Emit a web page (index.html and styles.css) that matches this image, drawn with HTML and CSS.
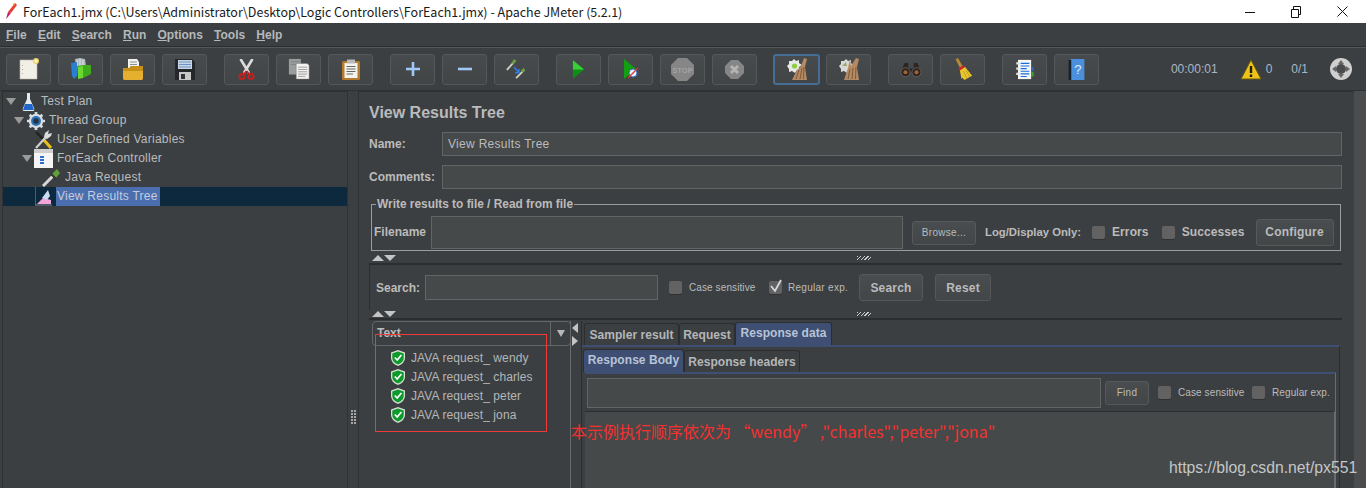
FILE: index.html
```html
<!DOCTYPE html>
<html lang="en">
<head>
<meta charset="utf-8">
<title>ForEach1.jmx - Apache JMeter (5.2.1)</title>
<link rel="stylesheet" href="styles.css">
</head>
<body>
<div class="app">
  <header class="titlebar">
    <svg class="title-icon" width="12" height="17" viewBox="0 0 12 17"><path d="M10 0 L12 2 L6 10 L3 9Z" fill="#e8402f"/><path d="M3 9 L6 10 L2 15 L1 16Z" fill="#c2205c"/><path d="M8 1 L10 0 L9 3Z" fill="#f39a2d"/></svg>
    <span class="title-text">ForEach1.jmx (C:\Users\Administrator\Desktop\Logic Controllers\ForEach1.jmx) - Apache JMeter (5.2.1)</span>
    <div class="win-controls">
      <span class="win-btn"><svg width="10" height="10" viewBox="0 0 10 10"><path d="M0 5.5H10" stroke="#111" fill="none"/></svg></span>
      <span class="win-btn"><svg width="10" height="12" viewBox="0 0 10 12"><path d="M0.5 3.5H7.5V11.5H0.5ZM2.5 3.5V0.5H9.5V8.5H7.5" stroke="#111" fill="none"/></svg></span>
      <span class="win-btn"><svg width="11" height="11" viewBox="0 0 11 11"><path d="M0.5 0.5L10.5 10.5M10.5 0.5L0.5 10.5" stroke="#111" fill="none"/></svg></span>
    </div>
  </header>
  <nav class="menubar">
    <span><u>F</u>ile</span><span><u>E</u>dit</span><span><u>S</u>earch</span><span><u>R</u>un</span><span><u>O</u>ptions</span><span><u>T</u>ools</span><span><u>H</u>elp</span>
  </nav>
  <div class="toolbar">
    <div class="tool-group">
      <button class="tool"><svg width="20" height="22" viewBox="0 0 20 22"><path d="M1 2H18V21H1Z" fill="#f1efe6" stroke="#bdbbb0" stroke-width=".6"/><circle cx="17" cy="3" r="3" fill="#e9d568"/><circle cx="17" cy="3" r="1.500" fill="#fff9c9"/><path d="M3.500 7v.8M3.500 11v.8M3.500 15v.8" stroke="#999" fill="none"/></svg></button>
      <button class="tool"><svg width="20" height="22" viewBox="0 0 20 22"><path d="M4 1L9 0L14 1L15 8H5Z" fill="#aeb8bc"/><path d="M6 2V8M9 1V8M12 2V8" stroke="#e1e6e8" fill="none"/><path d="M0 5L6 4V18L3 21L1 18Z" fill="#2b7fd0"/><path d="M6 8L13 7H20V16L12 20H7Z" fill="#3faa1d"/><path d="M12 8V20L7 21V9Z" fill="#6ad92f"/></svg></button>
      <button class="tool"><svg width="20" height="21" viewBox="0 0 20 21"><path d="M5 0H14L16 3V12H5Z" fill="#f2f2ee"/><path d="M7 3H14M7 5.500H14M7 8H14" stroke="#8a8f96" fill="none"/><path d="M0 9H6L8 7H20V19Q20 21 18 21H2Q0 21 0 19Z" fill="#c88f18"/><path d="M0 12H20V19Q20 21 18 21H2Q0 21 0 19Z" fill="#e5b030"/></svg></button>
      <button class="tool"><svg width="20" height="21" viewBox="0 0 20 21"><path d="M0 0H17L20 3V21H0Z" fill="#25272a"/><path d="M3 1H17V10H3Z" fill="#c9d6e6"/><path d="M4 3H16M4 5.500H16M4 8H16" stroke="#6f94c4" fill="none"/><path d="M4 13H16V21H4Z" fill="#c8c8c8"/><path d="M6 15H10V20H6Z" fill="#333"/></svg></button>
    </div>
    <div class="tool-group">
      <button class="tool"><svg width="17" height="21" viewBox="0 0 17 21"><path d="M2.500 0L11 14M14.500 0L6 14" stroke="#dcdcdc" stroke-width="2.600" fill="none"/><circle cx="4" cy="17.500" r="2.500" fill="none" stroke="#c51f1f" stroke-width="2"/><circle cx="13" cy="17.500" r="2.500" fill="none" stroke="#c51f1f" stroke-width="2"/><path d="M8.500 12L5.500 15.500M8.500 12L11.500 15.500" stroke="#c51f1f" stroke-width="1.800"/></svg></button>
      <button class="tool"><svg width="22" height="22" viewBox="0 0 24 24"><path d="M1 1H14V18H1Z" fill="#9b9d9d"/><path d="M3 4H13M3 7H13" stroke="#7f8182" fill="none"/><path d="M9 6H21L23 8V23H9Z" fill="#f2f2f0" stroke="#777" stroke-width=".5"/><path d="M11 10H21M11 12.500H21M11 15H21M11 17.500H21M11 20H19" stroke="#999" fill="none"/></svg></button>
      <button class="tool"><svg width="18" height="21" viewBox="0 0 18 21"><rect x="0" y="2" width="18" height="19" rx="1.500" fill="#b57a2d"/><path d="M2.500 4H15.500V19H2.500Z" fill="#f4f4ef"/><path d="M5 0.500H13V4.500H5Z" fill="#b9b9b9"/><path d="M4.500 7.500H13.500M4.500 10H13.500M4.500 12.500H13.500M4.500 15H11" stroke="#666" fill="none"/></svg></button>
    </div>
    <div class="tool-group">
      <button class="tool"><svg width="14" height="14" viewBox="0 0 14 14"><path d="M7 0V14M0 7H14" stroke="#9fc8f6" stroke-width="2.600" fill="none"/></svg></button>
      <button class="tool"><svg width="14" height="14" viewBox="0 0 14 14"><path d="M0 7H14" stroke="#9fc8f6" stroke-width="2.600" fill="none"/></svg></button>
      <button class="tool"><svg width="22" height="22" viewBox="0 0 24 24"><path d="M1 13L10 3" stroke="#cfd3c8" stroke-width="2" fill="none"/><path d="M7 6L10 2" stroke="#6b9b3c" stroke-width="3" fill="none"/><path d="M11 22L20 13" stroke="#cfd3c8" stroke-width="2" fill="none"/><path d="M17 15L20 12" stroke="#6b9b3c" stroke-width="3" fill="none"/><path d="M9 10L14 16M14 12V16H10" stroke="#2f7fe8" stroke-width="1.600" fill="none"/></svg></button>
    </div>
    <div class="tool-group">
      <button class="tool"><svg width="13" height="19" viewBox="0 0 14 20"><path d="M1 0L13 10L1 20Z" fill="#0f8f14"/><path d="M1 0L13 10L1 10Z" fill="#39cf39"/></svg></button>
      <button class="tool"><svg width="16" height="20" viewBox="0 0 16 20"><path d="M1 0L13 10L1 20Z" fill="#12a012"/><circle cx="10" cy="14" r="4" fill="#e8eefb" stroke="#3b6fc4"/><path d="M5 19L15 9" stroke="#d8352c" stroke-width="1.300"/></svg></button>
      <button class="tool"><svg width="23" height="23" viewBox="0 0 23 23"><path d="M7 0H16L23 7V16L16 23H7L0 16V7Z" fill="#868686"/><text x="11.500" y="14.500" class="stop-word">STOP</text></svg></button>
      <button class="tool"><svg width="19" height="19" viewBox="0 0 19 19"><path d="M6 0H13L19 6V13L13 19H6L0 13V6Z" fill="#868686"/><path d="M6 6L13 13M13 6L6 13" stroke="#b4b4b4" stroke-width="3"/></svg></button>
    </div>
    <div class="tool-group">
      <button class="tool tool-on"><svg width="20" height="23" viewBox="0 0 20 23"><path d="M7 1L9 3L12 2L12 5L15 7L12 9L13 12L10 12L8 15L5 13L2 14L2 11L0 8L2 6L2 3L5 3Z" fill="#e8e8e8"/><circle cx="7.500" cy="8" r="2.600" fill="#8fcf3c"/><path d="M17 0L20 1L18 9L20 22H5L10 12L14 8Z" fill="#b48a62"/><path d="M9 21L12 12M13 21L15 10M16.500 21L17 9" stroke="#7d5a3b" fill="none"/></svg></button>
      <button class="tool"><svg width="20" height="23" viewBox="0 0 20 23"><path d="M7 1L9 3L12 2L12 5L14 7L12 9L13 12L10 12L8 15L5 13L2 14L2 11L0 8L2 6L2 3L5 3Z" fill="#d8d8d8"/><path d="M3 8L7 4L8 8Z" fill="#9aa772"/><path d="M11 1L12 8L17 0L20 1L18 9L20 22H5L9 10Z" fill="#b48a62"/><path d="M9 21L11 11M13 21L14 10M16.500 21L17 9" stroke="#7d5a3b" fill="none"/></svg></button>
    </div>
    <div class="tool-group">
      <button class="tool"><svg width="22" height="17" viewBox="0 0 24 18"><path d="M5 2H9V8H15V2H19L23 12H1Z" fill="#2a2422"/><circle cx="6" cy="12" r="5" fill="#2b2624" stroke="#6a625d"/><circle cx="18" cy="12" r="5" fill="#2b2624" stroke="#6a625d"/><circle cx="6" cy="12" r="2.200" fill="#a5622f"/><circle cx="18" cy="12" r="2.200" fill="#a5622f"/></svg></button>
      <button class="tool"><svg width="21" height="23" viewBox="0 0 24 26"><path d="M4 1L7 0L12 9L9 11Z" fill="#b98a36"/><path d="M7 12L13 8L15 10L9 14Z" fill="#d3242a"/><path d="M9 14L15 10L23 20L14 25L12 22L11 24Z" fill="#eac62a"/><path d="M13 15L17 23M16 14L20 21" stroke="#b8981c" fill="none"/></svg></button>
    </div>
    <div class="tool-group">
      <button class="tool"><svg width="22" height="21" viewBox="0 0 22 24"><path d="M3 1H18V23H3Z" fill="#f6f6f6"/><path d="M6 5H16M6 8H16M6 11H13M6 14H16M6 17H16M6 20H13" stroke="#1a6fe0" stroke-width="1.400" fill="none"/><path d="M1 5H5M1 11H5M1 17H5" stroke="#e6e6e6" stroke-width="2.500" fill="none"/><path d="M18 9H21V14H18Z" fill="#2d66b8"/><path d="M18 15H21V20H18Z" fill="#3da02a"/></svg></button>
      <button class="tool"><svg width="17" height="21" viewBox="0 0 18 24"><path d="M2 0H18V24H2Z" fill="#4a90dc"/><path d="M0 1H3V24H0Z" fill="#15222e"/><text x="10.500" y="17" class="help-mark">?</text></svg></button>
    </div>
    <div class="status">
      <span class="timer">00:00:01</span>
      <svg class="warn" width="22" height="21" viewBox="0 0 22 21"><path d="M11 1L21 20H1Z" fill="#eec318" stroke="#6b5a10"/><path d="M11 7V14M11 15.500V18" stroke="#1d1d1d" stroke-width="2.400" fill="none"/></svg>
      <span class="warn-count">0</span>
      <span class="ratio">0/1</span>
      <svg width="22" height="24" viewBox="0 0 22 24"><circle cx="11" cy="12" r="11" fill="#cfcfcf"/><circle cx="11" cy="12" r="5" fill="#4a4c4e"/><path d="M11 3L14 7H8ZM11 21L8 17H14ZM2 12L6 9V15ZM20 12L16 15V9Z" fill="#666"/></svg>
    </div>
  </div>
  <main class="workspace">
    <aside class="tree">
      <div class="tree-row lvl0"><span class="caret"></span><svg class="tree-icon" width="13" height="18" viewBox="0 0 13 18"><path d="M5 0H8V6L12 15Q13 18 11 18H2Q0 18 1 15L5 6Z" fill="#e4e9ef"/><path d="M3 11H10L12 17H1Z" fill="#1f66cc"/></svg><span class="tree-label">Test Plan</span></div>
      <div class="tree-row lvl1"><span class="caret"></span><svg class="tree-icon" width="18" height="18" viewBox="0 0 20 20"><circle cx="10" cy="10" r="8" fill="#d6dde4"/><path d="M10 0V20M0 10H20M3 3L17 17M17 3L3 17" stroke="#d6dde4" stroke-width="3"/><circle cx="10" cy="10" r="5.500" fill="#2d6fb6"/><circle cx="10" cy="10" r="3" fill="#26323d"/></svg><span class="tree-label">Thread Group</span></div>
      <div class="tree-row lvl2"><svg class="tree-icon" width="17" height="19" viewBox="0 0 17 19"><path d="M1 2L8 9" stroke="#222" stroke-width="2.200"/><path d="M8 9L16 18" stroke="#e9c218" stroke-width="3"/><path d="M1 18L11 7" stroke="#cfcfcf" stroke-width="2.200"/><path d="M9 7L10 3L14 0L13 4L17 3L16 6L12 9Z" fill="#dcdcdc"/></svg><span class="tree-label">User Defined Variables</span></div>
      <div class="tree-row lvl3"><span class="caret"></span><svg class="tree-icon" width="19" height="19" viewBox="0 0 19 19"><path d="M0 0H19V19H0Z" fill="#f5f5f5"/><path d="M0 0H19V4H0Z" fill="#cfcfcf"/><path d="M6 8H10M6 11H10M6 14H10" stroke="#2b6fd0" stroke-width="2"/></svg><span class="tree-label">ForEach Controller</span></div>
      <div class="tree-row lvl4"><svg class="tree-icon" width="19" height="18" viewBox="0 0 19 18"><path d="M1 17L11 7" stroke="#d8d8d8" stroke-width="3"/><path d="M10 5L14 9L18 4L15 0Z" fill="#5fa23a"/><path d="M9 5L14 10" stroke="#333" stroke-width="2"/></svg><span class="tree-label">Java Request</span></div>
      <div class="tree-row lvl5 is-selected"><svg class="tree-icon" width="17" height="19" viewBox="0 0 17 19"><path d="M0 0V18H17" stroke="#8f8f8f" fill="none"/><path d="M2 17L8 11L16 13V17Z" fill="#f0a4d8"/><path d="M7 11L13 3L15 9L12 13Z" fill="#c9dcf5"/></svg><span class="tree-label">View Results Tree</span></div>
    </aside>
    <div class="v-divider"><span class="grip"></span></div>
    <section class="detail">
      <h1 class="detail-title">View Results Tree</h1>
      <div class="form-row name-row"><label class="form-label">Name:</label><div class="field field-text">View Results Tree</div></div>
      <div class="form-row comment-row"><label class="form-label">Comments:</label><div class="field"></div></div>
      <fieldset class="file-box">
        <legend>Write results to file / Read from file</legend>
        <div class="file-row">
          <label class="file-label">Filename</label>
          <div class="field filename"></div>
          <button class="btn btn-small browse">Browse...</button>
          <span class="log-label">Log/Display Only:</span>
          <span class="check check-a"></span><span class="opt">Errors</span>
          <span class="check check-b"></span><span class="opt">Successes</span>
          <button class="btn configure">Configure</button>
        </div>
      </fieldset>
      <div class="split-bar"><span class="arrow-up"></span><span class="arrow-down"></span><span class="split-grip"></span></div>
      <div class="search-row">
        <label class="search-label">Search:</label>
        <div class="field search-field"></div>
        <span class="check"></span><span class="small-opt case-opt">Case sensitive</span>
        <span class="check check-on"><svg width="14" height="14" viewBox="0 0 14 14"><path d="M2 7L6 12L12 1" stroke="#d8d8d8" stroke-width="1.800" fill="none"/></svg></span><span class="small-opt regex-opt">Regular exp.</span>
        <button class="btn search-btn">Search</button>
        <button class="btn reset-btn">Reset</button>
      </div>
      <div class="split-bar split-bar-2"><span class="arrow-up"></span><span class="arrow-down"></span><span class="split-grip"></span></div>
      <div class="results">
        <div class="result-left">
          <div class="combo"><span class="combo-text">Text</span><span class="combo-arrow"></span></div>
          <ul class="result-list">
            <li><svg class="shield" width="14" height="16" viewBox="0 0 14 16"><path d="M7 0L14 2.500V8Q14 13 7 16Q0 13 0 8V2.500Z" fill="#d7dcd5"/><path d="M7 1.500L12.700 3.500V8Q12.700 12 7 14.600Q1.300 12 1.300 8V3.500Z" fill="#0c9a2b"/><path d="M3.800 7.500L6.200 10L10.400 5" stroke="#fff" stroke-width="1.700" fill="none"/></svg>JAVA request_ wendy</li>
            <li><svg class="shield" width="14" height="16" viewBox="0 0 14 16"><path d="M7 0L14 2.500V8Q14 13 7 16Q0 13 0 8V2.500Z" fill="#d7dcd5"/><path d="M7 1.500L12.700 3.500V8Q12.700 12 7 14.600Q1.300 12 1.300 8V3.500Z" fill="#0c9a2b"/><path d="M3.800 7.500L6.200 10L10.400 5" stroke="#fff" stroke-width="1.700" fill="none"/></svg>JAVA request_ charles</li>
            <li><svg class="shield" width="14" height="16" viewBox="0 0 14 16"><path d="M7 0L14 2.500V8Q14 13 7 16Q0 13 0 8V2.500Z" fill="#d7dcd5"/><path d="M7 1.500L12.700 3.500V8Q12.700 12 7 14.600Q1.300 12 1.300 8V3.500Z" fill="#0c9a2b"/><path d="M3.800 7.500L6.200 10L10.400 5" stroke="#fff" stroke-width="1.700" fill="none"/></svg>JAVA request_ peter</li>
            <li><svg class="shield" width="14" height="16" viewBox="0 0 14 16"><path d="M7 0L14 2.500V8Q14 13 7 16Q0 13 0 8V2.500Z" fill="#d7dcd5"/><path d="M7 1.500L12.700 3.500V8Q12.700 12 7 14.600Q1.300 12 1.300 8V3.500Z" fill="#0c9a2b"/><path d="M3.800 7.500L6.200 10L10.400 5" stroke="#fff" stroke-width="1.700" fill="none"/></svg>JAVA request_ jona</li>
          </ul>
        </div>
        <div class="v-split"><span class="tri-left"></span><span class="tri-right"></span></div>
        <div class="result-right">
          <div class="tabs">
            <span class="tab tab-sampler">Sampler result</span><span class="tab tab-request">Request</span><span class="tab tab-active tab-response">Response data</span>
          </div>
          <div class="tab-body">
            <div class="tabs subtabs">
              <span class="tab tab-active tab-body-tab">Response Body</span><span class="tab tab-headers">Response headers</span>
            </div>
            <div class="sub-body">
              <div class="find-row">
                <div class="field find-field"></div>
                <button class="btn btn-small find-btn">Find</button>
                <span class="check"></span><span class="small-opt find-case">Case sensitive</span>
                <span class="check"></span><span class="small-opt">Regular exp.</span>
              </div>
              <div class="text-area"></div>
            </div>
          </div>
        </div>
      </div>
    </section>
    <div class="scroll-strip"></div>
  </main>
  <div class="note-box"></div>
  <div class="note-text">本示例执行顺序依次为 “wendy” ,"charles","peter","jona"</div>
  <div class="watermark">https://blog.csdn.net/px551</div>
</div>
</body>
</html>
```
FILE: styles.css
```css
* { box-sizing: border-box; }
html, body { margin: 0; padding: 0; background: #3c3f41; }
.app {
  position: relative;
  width: 1366px;
  height: 488px;
  overflow: hidden;
  display: flex;
  flex-direction: column;
  font-family: "Liberation Sans", Arial, sans-serif;
  font-size: 12px;
  color: #bbbbbb;
  background: #3c3f41;
}
button { font-family: inherit; margin: 0; padding: 0; color: inherit; }

/* title bar */
.titlebar {
  height: 23px;
  flex: none;
  background: #fff;
  display: flex;
  align-items: center;
  padding-left: 5px;
}
.title-icon { flex: none; margin-right: 6px; }
.title-text {
  font-family: "Noto Sans CJK SC", "Noto Sans", sans-serif;
  font-size: 12.500px;
  color: #1a1a1a;
  white-space: nowrap;
}
.win-controls { margin-left: auto; display: flex; padding-right: 1px; }
.win-btn { width: 46px; height: 23px; display: flex; align-items: center; justify-content: center; }

/* menu */
.menubar {
  height: 24px;
  flex: none;
  display: flex;
  align-items: center;
  gap: 11.200px;
  padding-left: 6px;
  font-weight: bold;
  font-size: 12px;
  color: #b4b8bb;
  border-bottom: 1px solid #2b2d2e;
}

/* toolbar */
.toolbar {
  height: 44px;
  flex: none;
  display: flex;
  align-items: center;
  padding-left: 6px;
  gap: 17px;
  border-top: 1px solid #55585a;
  border-bottom: 1px solid #2f3132;
}
.tool-group { display: flex; gap: 7px; }
.tool {
  width: 45px;
  height: 31px;
  background: linear-gradient(#484b4d, #424546);
  border: 1px solid #555759;
  border-radius: 3px;
  display: flex;
  align-items: center;
  justify-content: center;
}
.tool-on {
  border: 2px solid #466d94;
  width: 47px;
  margin: 0 -1px;
}
.stop-word { font: bold 7.500px "Liberation Sans", sans-serif; fill: #a4a4a4; text-anchor: middle; }
.help-mark { font: 15px "Liberation Sans", sans-serif; fill: #dcecff; text-anchor: middle; }
.status {
  margin-left: auto;
  display: flex;
  align-items: center;
  padding-right: 14px;
  font-size: 12px;
  color: #a9b7c6;
}
.timer { margin-right: 22px; }
.warn { margin-right: 4px; }
.warn-count { margin-right: 19px; }
.ratio { margin-right: 22px; }

/* workspace */
.workspace { flex: 1; display: flex; min-height: 0; padding-left: 2px; }
.tree {
  width: 346px;
  flex: none;
  border-top: 1px solid #2f3132;
  border-right: 1px solid #2f3132;
  border-left: 1px solid #2f3132;
}
.tree-row { height: 19px; display: flex; align-items: center; white-space: nowrap; color: #b9bbbd; letter-spacing: .24px; }
.tree-label { padding: 0 2px 0 1px; line-height: 19px; }
.tree-icon { flex: none; }
.caret { width: 0; height: 0; border-left: 5px solid transparent; border-right: 5px solid transparent; border-top: 7px solid #9a9a9a; flex: none; }
.lvl0 { padding-left: 3px; }
.lvl0 .caret { margin-right: 6px; }
.lvl0 .tree-icon { margin-right: 5px; }
.lvl1 { padding-left: 11px; }
.lvl1 .caret { margin-right: 3px; }
.lvl1 .tree-icon { margin-right: 3px; }
.lvl2 { padding-left: 32px; }
.lvl2 .tree-icon { margin-right: 4px; }
.lvl3 { padding-left: 19px; }
.lvl3 .caret { margin-right: 2px; }
.lvl3 .tree-icon { margin-right: 3px; }
.lvl4 { padding-left: 39px; }
.lvl4 .tree-icon { margin-right: 3px; }
.lvl5 { padding-left: 32px; }
.lvl5 .tree-icon { margin-right: 4px; }
.is-selected { background: #0d293e; }
.is-selected .tree-label { background: #4b6eaf; color: #c3cdde; }
.v-divider { width: 10px; flex: none; display: flex; align-items: flex-end; justify-content: center; padding-bottom: 63px; }
.grip { width: 5px; height: 15px; background-image: radial-gradient(circle at 1px 1px, #a5a5a5 1px, transparent 1px); background-size: 3px 3px; }
.detail { width: 996px; flex: none; padding-left: 10px; display: flex; flex-direction: column; border-left: 1px solid #2f3132; border-top: 1px solid #2f3132; min-height: 0; }
.scroll-strip { width: 12px; flex: none; background: #4a4c4e; }

.detail-title { margin: 0; padding-top: 11px; height: 40px; font-size: 16px; font-weight: bold; line-height: 20px; color: #b9bbbd; }
.form-row { display: flex; align-items: center; height: 24px; flex: none; }
.comment-row { margin-top: 9px; }
.form-label { width: 73px; font-weight: bold; flex: none; }
.field { background: #45494a; border: 1px solid #646464; height: 100%; }
.form-row .field { width: 900px; }
.field-text { display: flex; align-items: center; padding-left: 5px; letter-spacing: .3px; }

.file-box {
  margin: 8px 0 0 2px;
  width: 970px;
  height: 54px;
  flex: none;
  padding: 0 0 0 2px;
  border: 1px solid #9a9c9e;
  min-width: 0;
}
.file-box legend { font-weight: bold; padding: 0 1px; margin-left: 2px; font-size: 11.900px; line-height: 14px; }
.file-row { display: flex; align-items: center; height: 33px; margin-top: 5px; }
.file-label { width: 57px; font-weight: bold; flex: none; padding-bottom: 2px; }
.filename { width: 472px; flex: none; }
.browse { width: 64px; height: 24px; margin-left: 9px; }
.log-label { margin-left: 9px; font-weight: bold; font-size: 11.300px; width: 107px; flex: none; white-space: nowrap; padding-bottom: 2px; }
.check { width: 13px; height: 13px; flex: none; background: #626262; border-radius: 2px; box-shadow: 0 1px 0 #2f3132; display: inline-flex; align-items: center; justify-content: center; }
.check-on svg { flex: none; margin-top: -3px; }
.opt { font-weight: bold; margin-left: 7px; letter-spacing: .1px; padding-bottom: 2px; }
.check-b { margin-left: 13px; }
.configure { width: 78px; height: 27px; margin-left: 11px; letter-spacing: 0; font-size: 11.500px; padding-bottom: 2px; }
.btn { background: linear-gradient(#4a4d4f, #434647); border: 1px solid #565859; border-radius: 3px; font-weight: bold; font-size: 12px; color: #b9bbbd; flex: none; letter-spacing: .2px; }
.btn-small { font-weight: normal; font-size: 10px; letter-spacing: .3px; }

.split-bar { height: 14px; flex: none; width: 973px; display: flex; align-items: flex-start; padding: 4px 0 0 3px; border-bottom: 2px solid #2b2d2e; gap: 1px; }
.arrow-up { width: 0; height: 0; flex: none; border-left: 6px solid transparent; border-right: 6px solid transparent; border-bottom: 6px solid #c4c4c4; }
.arrow-down { width: 0; height: 0; flex: none; border-left: 6px solid transparent; border-right: 6px solid transparent; border-top: 6px solid #c4c4c4; margin-left: -1px; }
.split-grip { margin-left: 460px; margin-top: 1px; width: 14px; height: 4px; flex: none; background-image: repeating-linear-gradient(135deg, #cfcfcf 0 1px, #3c3f41 1px 2.500px); }
.search-row { height: 45px; flex: none; display: flex; align-items: center; padding-left: 6px; border-left: 1px solid #2b2d2e; }
.search-label { font-weight: bold; width: 49px; flex: none; }
.search-field { width: 233px; height: 25px; flex: none; }
.search-row .check { margin-left: 11px; }
.small-opt { font-size: 10px; margin-left: 7px; letter-spacing: .1px; white-space: nowrap; }
.case-opt { width: 66px; }
.search-row .check-on { margin-left: 14px; }
.regex-opt { width: 60px; margin-left: 6px; letter-spacing: .28px; }
.search-btn { width: 64px; height: 27px; margin-left: 11px; }
.reset-btn { width: 56px; height: 27px; margin-left: 12px; }
.split-bar-2 { height: 10px; padding-top: 1px; }

.results { flex: 1; display: flex; min-height: 0; margin-left: 3px; margin-top: 1px; }
.result-left { width: 199px; flex: none; border-right: 1px solid #6a6c6e; }
.combo { height: 25px; display: flex; align-items: center; border: 1px solid #646668; border-radius: 4px; width: 199px; font-weight: bold; }
.combo-text { flex: 1; padding: 0 0 2px 4px; }
.combo-arrow { width: 20px; height: 100%; border-left: 1px solid #646668; display: flex; align-items: center; justify-content: center; }
.combo-arrow::after { content: ""; border-left: 4px solid transparent; border-right: 4px solid transparent; border-top: 7px solid #b8b8b8; }
.result-list { list-style: none; margin: 2px 0 0; padding: 0 0 0 19px; }
.result-list li { height: 19px; display: flex; align-items: center; white-space: nowrap; letter-spacing: .1px; color: #b4b6b8; }
.shield { margin-right: 6px; flex: none; }
.v-split { width: 11px; flex: none; padding-top: 2px; padding-left: 1px; display: flex; flex-direction: column; gap: 3px; border-right: 1px solid #2b2d2e; }
.tri-left { width: 0; height: 0; border-top: 5px solid transparent; border-bottom: 5px solid transparent; border-right: 6px solid #c4c4c4; }
.tri-right { width: 0; height: 0; border-top: 5px solid transparent; border-bottom: 5px solid transparent; border-left: 6px solid #c4c4c4; }
.result-right { width: 758px; flex: none; min-height: 0; display: flex; flex-direction: column; }
.tabs { display: flex; align-items: flex-end; padding-left: 2px; height: 24px; flex: none; }
.tab { height: 22px; display: flex; align-items: center; justify-content: center; font-weight: bold; border: 1px solid #2b2d2e; border-bottom: 0; border-radius: 3px 3px 0 0; letter-spacing: .05px; flex: none; color: #b4b6b8; }
.tab-active { background: #3e4f73; color: #b8c3d6; height: 23px; padding-bottom: 2px; }
.tab-sampler { width: 95px; }
.tab-request { width: 56px; }
.tab-response { width: 97px; }
.tab-body { flex: 1; border-top: 2px solid #3e4f73; border-right: 1px solid #2b2d2e; min-height: 0; display: flex; flex-direction: column; padding-top: 1px; }
.subtabs { padding-left: 1px; height: 24px; }
.tab-body-tab { width: 101px; }
.tab-headers { width: 116px; }
.sub-body { flex: 1; border-top: 2px solid #3e4f73; min-height: 0; display: flex; flex-direction: column; margin-right: 3px; margin-left: 3px; border-right: 1px solid #6a6c6e; }
.find-row { height: 37px; flex: none; display: flex; align-items: center; padding-left: 2px; }
.find-field { width: 514px; height: 30px; flex: none; margin-top: 1px; }
.find-btn { width: 44px; height: 24px; margin-left: 4px; }
.find-row .check { margin-left: 9px; }
.find-case { width: 67px; }
.find-row .find-case + .check { margin-left: 7px; }
.text-area { flex: 1; background: #45494a; border-top: 1px solid #2b2d2e; border-right: 1px solid #6a6c6e; }

/* annotations laid over the screenshot */
.note-box { position: absolute; left: 375px; top: 334px; width: 172px; height: 98px; border: 1px solid #f03a3a; }
.note-text { position: absolute; left: 571px; top: 421px; font-family: "Noto Sans CJK SC", sans-serif; font-size: 16px; line-height: 20px; color: #f5302f; white-space: nowrap; }
.watermark { position: absolute; left: 1169px; top: 458px; font-size: 15.750px; line-height: 20px; color: #c4c6c8; white-space: nowrap; }
```
